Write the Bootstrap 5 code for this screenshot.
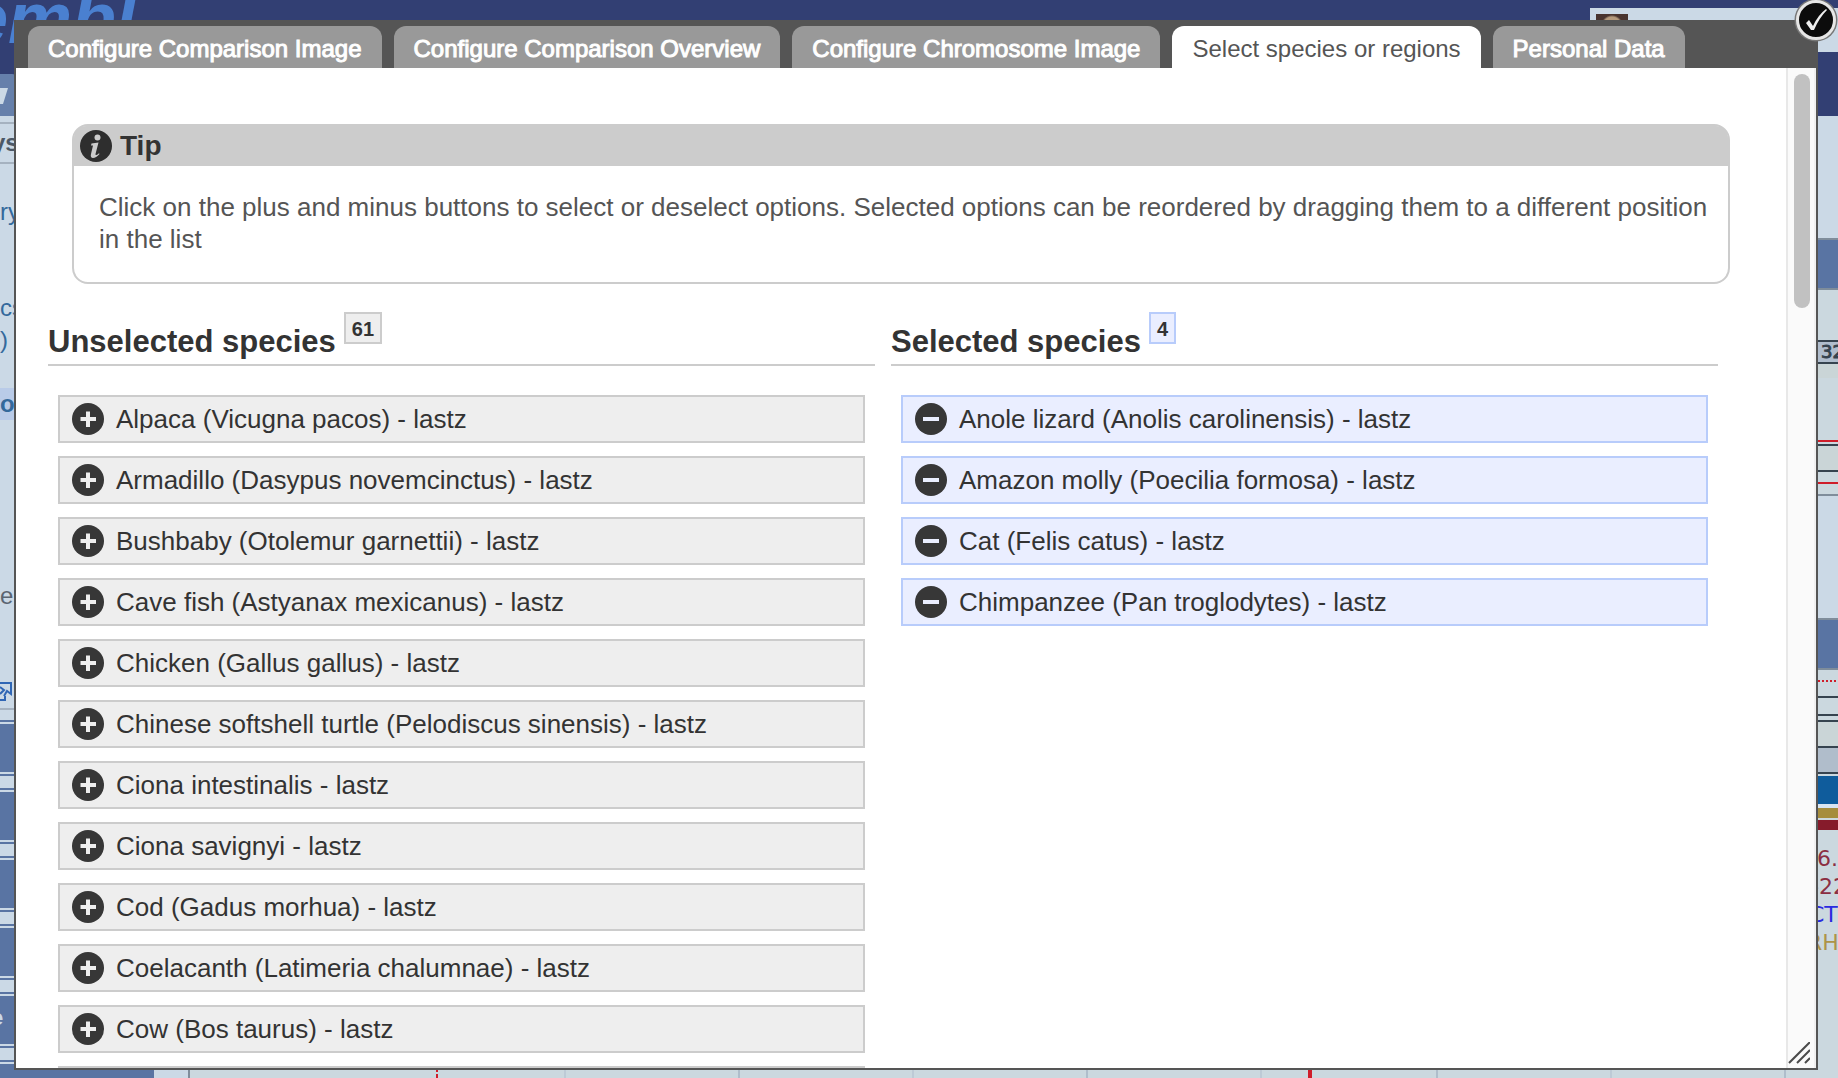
<!DOCTYPE html>
<html lang="en">
<head>
<meta charset="utf-8">
<meta name="viewport" content="width=device-width, initial-scale=1">
<title>Select species or regions</title>
<link href="https://cdn.jsdelivr.net/npm/bootstrap@5.3.0/dist/css/bootstrap.min.css" rel="stylesheet">
<style>
body{font-family:"Liberation Sans",Arial,sans-serif;font-size:26px;line-height:32px;color:#333;background:#cbd9e6}
/* page behind the dialog */
.site{height:100vh}
.masthead{height:116px;background:#323f73}
.site-logo{font-size:72px;line-height:36px;font-weight:700;font-style:italic;color:#4a80d0;margin-left:-32px}
.account{width:248px;height:44px;margin-top:8px;padding:6px;background:#cbd9e6}
.avatar{width:32px;height:32px;background:radial-gradient(circle at 50% 12px,#b59a7c 0 9px,#49342f 11px)}
.site-tab{width:16px;height:42px;background:#6680ab;border-top-right-radius:4px}
.side{width:154px;font-size:24px;color:#34699c}
.side a{color:#34699c;text-decoration:none}
.side-title{height:42px;margin-top:6px;border:solid #a5b2c0;border-width:2px 0;font-weight:700;color:#4c5866}
.side-title span{margin-left:-8px}
.side-links{height:546px;border-bottom:2px solid #a5b2c0;padding-top:32px}
.side-links .current{margin-top:32px;background:#b9cbe8;font-weight:700}
.side-links .other{margin-top:160px;color:#5a6572}
.side-links svg{margin-top:70px}
.gap-lg{margin-top:64px}
.side-btns{padding-top:10px}
.side-btn{height:56px;margin-bottom:12px;border:solid #5974a3;border-width:2px 0;padding:2px 0;font-size:22px}
.side-btn span{display:block;height:48px;background:#5974a3;color:#cbd9e6;line-height:44px}
.side-btn span b{margin-left:-9px}
/* dialog */
.dialog{position:fixed;top:20px;right:20px;bottom:8px;left:14px;background:#555;padding:0 2px 2px}
.dialog-tabs{height:48px;padding:6px 12px 0;gap:12px;border:0;font-size:24px}
.dialog-tabs .nav-link{height:42px;padding:0 20px;line-height:46px;border:0;margin:0;border-radius:12px 12px 0 0;background:#999;color:#fff;-webkit-text-stroke:1px #fff}
.dialog-tabs .nav-link.active{background:#fff;color:#555;-webkit-text-stroke:0}
.done{position:absolute;top:-22px;right:-20px;width:44px;height:44px}
.dialog-main{background:#fff;min-height:0}
.track{width:30px;background:#fafafa;border-left:2px solid #e8e8e8;border-right:2px solid #f0f0f0;padding:6px 4px 4px 6px}
.thumb{width:16px;height:234px;border-radius:8px;background:#c1c1c1}
.grip{width:22px;height:22px;margin-left:-6px}
.tip{margin:56px 56px 0;border:2px solid #ccc;border-radius:16px;min-height:160px;color:#555}
.tip h2{margin:0;height:40px;padding:2px 6px;gap:8px;background:#ccc;font-size:28px;font-weight:700;color:#333;border-radius:12px 12px 0 0}
.tip p{margin:0;padding:25px 12px 25px 25px}
.lists{gap:16px;padding:28px 68px 0 32px}
.lists h2{height:54px;margin:0 0 29px;border-bottom:2px solid #ccc;font-size:31px;font-weight:700;line-height:60px;gap:8px}
.tally{height:32px;border:2px solid #ccc;background:#eee;padding:0 6px;font-size:20px;line-height:30px}
.species{margin:0 10px;gap:13px;padding:0;list-style:none}
.species li{height:48px;border:2px solid #ccc;background:#eee;padding:0 12px;gap:12px}
.chosen .species li,.chosen .tally{border-color:#b8ccfb;background:#eaeeff}
.species svg,.tip svg{width:32px;height:32px;display:block}
</style>
<script src="https://cdn.jsdelivr.net/npm/bootstrap@5.3.0/dist/js/bootstrap.bundle.min.js"></script>
</head>
<body class="overflow-hidden">
<svg class="d-none">
<symbol id="plus" viewBox="0 0 32 32"><circle cx="16" cy="16" r="16" fill="#373737"/><path d="M14 8.500h4v5.500h6v4h-6v6h-4v-6H8.500v-4H14z" fill="#eee"/></symbol>
<symbol id="minus" viewBox="0 0 32 32"><circle cx="16" cy="16" r="16" fill="#373737"/><path d="M8 14h16v4H8z" fill="#eaeeff"/></symbol>
</svg>

<div class="site d-flex flex-column overflow-hidden" aria-hidden="true">
<header class="masthead d-flex justify-content-between flex-shrink-0">
<div class="d-flex flex-column justify-content-between"><div class="site-logo">embl</div>
<div class="site-tab"><svg class="d-block" width="14" height="42"><path d="M0 14H8L3 30H0z" fill="#cbd9e6"/></svg></div></div>
<div class="account"><div class="avatar"></div></div>
</header>
<div class="d-flex flex-grow-1 overflow-hidden">
<nav class="side flex-shrink-0">
<div class="side-title d-flex align-items-center"><span>ys</span></div>
<div class="side-links">
<div>ry</div><div class="gap-lg">cs</div><div>)</div>
<div class="current">or</div>
<div class="other">er</div>
<svg class="d-block" width="14" height="22"><path d="M0 1H11V12L7 9 4 14M0 5l4 3-4 4M0 18H5V14" fill="none" stroke="#2f66b5" stroke-width="2"/></svg>
</div>
<div class="side-btns">
<div class="side-btn"><span></span></div><div class="side-btn"><span></span></div><div class="side-btn"><span></span></div><div class="side-btn"><span></span></div>
<div class="side-btn"><span><b>e</b></span></div><div class="side-btn"><span></span></div>
</div>
</nav>
<div class="flex-grow-1 overflow-hidden">
<svg class="d-block w-100" height="962">
<rect x="35" y="172" width="100%" height="790" fill="#cbd8df"/>
<path d="M35 172V962" stroke="#7f8d9b" stroke-width="2"/>
<path d="M411 172V962M759 172V962M1107 172V962M1457 172V962" stroke="#bdcad6" stroke-width="2"/>
<path d="M585 172V962M933 172V962M1283 172V962M1631 172V962" stroke="#afbdcb" stroke-width="2"/>
<path d="M283 172V962" stroke="#cf1d2a" stroke-width="2" stroke-dasharray="4 2"/>
<path d="M1156 172V962" stroke="#cf1d2a" stroke-width="4"/>
<g shape-rendering="crispEdges">
<rect y="122" width="100%" height="52" fill="#7f8d9b"/><rect y="124" width="100%" height="48" fill="#5974a3"/>
<rect y="224" width="100%" height="24" fill="#36434f"/><rect y="226" width="100%" height="20" fill="#b0bdcd"/>
<rect y="248" width="100%" height="14" fill="#cad5d7"/>
<rect y="324" width="100%" height="2" fill="#cf1d2a"/>
<rect y="328" width="100%" height="28" fill="#36434f"/><rect y="330" width="100%" height="24" fill="#cad5d7"/>
<rect y="366" width="100%" height="2" fill="#cf1d2a"/>
<rect y="378" width="100%" height="2" fill="#7f8d9b"/><rect y="380" width="100%" height="122" fill="#cbd9e6"/>
<rect y="502" width="100%" height="52" fill="#7f8d9b"/><rect y="504" width="100%" height="48" fill="#5974a3"/>
<path d="M0 565H1700" stroke="#cf1d2a" stroke-width="2" stroke-dasharray="2 2"/>
<rect y="580" width="100%" height="2" fill="#36434f"/><rect y="598" width="100%" height="2" fill="#36434f"/>
<rect y="604" width="100%" height="28" fill="#36434f"/><rect y="606" width="100%" height="24" fill="#cad5d7"/>
<rect y="632" width="100%" height="26" fill="#36434f"/><rect y="632" width="100%" height="24" fill="#b0bdcb"/>
<rect y="660" width="100%" height="28" fill="#0f5c9c"/><rect y="688" width="100%" height="4" fill="#d9e5f2"/>
<rect y="692" width="100%" height="10" fill="#a68d3d"/><rect y="704" width="100%" height="10" fill="#861b2b"/>
</g>
<g font-family="DejaVu Sans,sans-serif">
<text x="1667" y="242" font-size="18" fill="#36434f" stroke="#36434f">32</text>
<g font-size="22"><text x="1663" y="750" fill="#8b2e42">6.1</text><text x="1657" y="778" fill="#8b2e42">-22</text>
<text x="1655" y="806" fill="#2a2ae0">CTF</text><text x="1653" y="834" fill="#ad9448">RHC</text></g>
</g>
</svg>
</div>
</div>
</div>

<div class="dialog d-flex flex-column" role="dialog" aria-label="Select species or regions">
<ul class="nav nav-tabs dialog-tabs flex-nowrap flex-shrink-0">
<li class="nav-item"><a class="nav-link" href="#">Configure Comparison Image</a></li>
<li class="nav-item"><a class="nav-link" href="#">Configure Comparison Overview</a></li>
<li class="nav-item"><a class="nav-link" href="#">Configure Chromosome Image</a></li>
<li class="nav-item"><a class="nav-link active" aria-current="page" href="#">Select species or regions</a></li>
<li class="nav-item"><a class="nav-link" href="#">Personal Data</a></li>
</ul>
<div class="dialog-main d-flex flex-grow-1">
<main class="flex-grow-1 overflow-hidden">
<section class="tip">
<h2 class="d-flex align-items-center"><svg viewBox="0 0 32 32"><circle cx="16" cy="16" r="16" fill="#2e2e2e"/><circle cx="17.500" cy="7.500" r="3" fill="#ccc"/><path d="M11.500 13.500 18.500 12.500 15.500 24q-.3 2.500 3.500-.8l.5.8q-3.500 4-6.500 4-3-.3-2-4l2-8.500h-2z" fill="#ccc"/></svg>Tip</h2>
<p>Click on the plus and minus buttons to select or deselect options. Selected options can be reordered by dragging them to a different position in the list</p>
</section>
<div class="lists d-flex">
<section class="w-50">
<h2 class="d-flex align-items-start">Unselected species <span class="tally">61</span></h2>
<ul class="species d-flex flex-column">
<li class="d-flex align-items-center"><button class="btn p-0 border-0" aria-label="Add"><svg><use href="#plus"/></svg></button>Alpaca (Vicugna pacos) - lastz</li>
<li class="d-flex align-items-center"><button class="btn p-0 border-0" aria-label="Add"><svg><use href="#plus"/></svg></button>Armadillo (Dasypus novemcinctus) - lastz</li>
<li class="d-flex align-items-center"><button class="btn p-0 border-0" aria-label="Add"><svg><use href="#plus"/></svg></button>Bushbaby (Otolemur garnettii) - lastz</li>
<li class="d-flex align-items-center"><button class="btn p-0 border-0" aria-label="Add"><svg><use href="#plus"/></svg></button>Cave fish (Astyanax mexicanus) - lastz</li>
<li class="d-flex align-items-center"><button class="btn p-0 border-0" aria-label="Add"><svg><use href="#plus"/></svg></button>Chicken (Gallus gallus) - lastz</li>
<li class="d-flex align-items-center"><button class="btn p-0 border-0" aria-label="Add"><svg><use href="#plus"/></svg></button>Chinese softshell turtle (Pelodiscus sinensis) - lastz</li>
<li class="d-flex align-items-center"><button class="btn p-0 border-0" aria-label="Add"><svg><use href="#plus"/></svg></button>Ciona intestinalis - lastz</li>
<li class="d-flex align-items-center"><button class="btn p-0 border-0" aria-label="Add"><svg><use href="#plus"/></svg></button>Ciona savignyi - lastz</li>
<li class="d-flex align-items-center"><button class="btn p-0 border-0" aria-label="Add"><svg><use href="#plus"/></svg></button>Cod (Gadus morhua) - lastz</li>
<li class="d-flex align-items-center"><button class="btn p-0 border-0" aria-label="Add"><svg><use href="#plus"/></svg></button>Coelacanth (Latimeria chalumnae) - lastz</li>
<li class="d-flex align-items-center"><button class="btn p-0 border-0" aria-label="Add"><svg><use href="#plus"/></svg></button>Cow (Bos taurus) - lastz</li>
<li></li>
</ul>
</section>
<section class="w-50 chosen">
<h2 class="d-flex align-items-start">Selected species <span class="tally">4</span></h2>
<ul class="species d-flex flex-column">
<li class="d-flex align-items-center"><button class="btn p-0 border-0" aria-label="Remove"><svg><use href="#minus"/></svg></button>Anole lizard (Anolis carolinensis) - lastz</li>
<li class="d-flex align-items-center"><button class="btn p-0 border-0" aria-label="Remove"><svg><use href="#minus"/></svg></button>Amazon molly (Poecilia formosa) - lastz</li>
<li class="d-flex align-items-center"><button class="btn p-0 border-0" aria-label="Remove"><svg><use href="#minus"/></svg></button>Cat (Felis catus) - lastz</li>
<li class="d-flex align-items-center"><button class="btn p-0 border-0" aria-label="Remove"><svg><use href="#minus"/></svg></button>Chimpanzee (Pan troglodytes) - lastz</li>
</ul>
</section>
</div>
</main>
<div class="track d-flex flex-column justify-content-between flex-shrink-0">
<div class="thumb"></div>
<svg class="grip" viewBox="0 0 22 22"><path d="M1 21 22 0M9 21 22 8M17 21 22 16" stroke="#4a4a4a" stroke-width="2" fill="none"/></svg>
</div>
</div>
<button class="done btn p-0 border-0" aria-label="Save and close"><svg class="d-block" width="44" height="44" viewBox="0 0 44 44"><circle cx="22" cy="22" r="21.500" fill="#777"/><circle cx="22" cy="22" r="18.500" fill="#0c0c0c" stroke="#e6e6e6" stroke-width="3"/><path d="M12 25 15 22 19 28Q24 17 32 11L33 12Q25 20 20 32H17Z" fill="#eee"/></svg></button>
</div>
</body>
</html>
